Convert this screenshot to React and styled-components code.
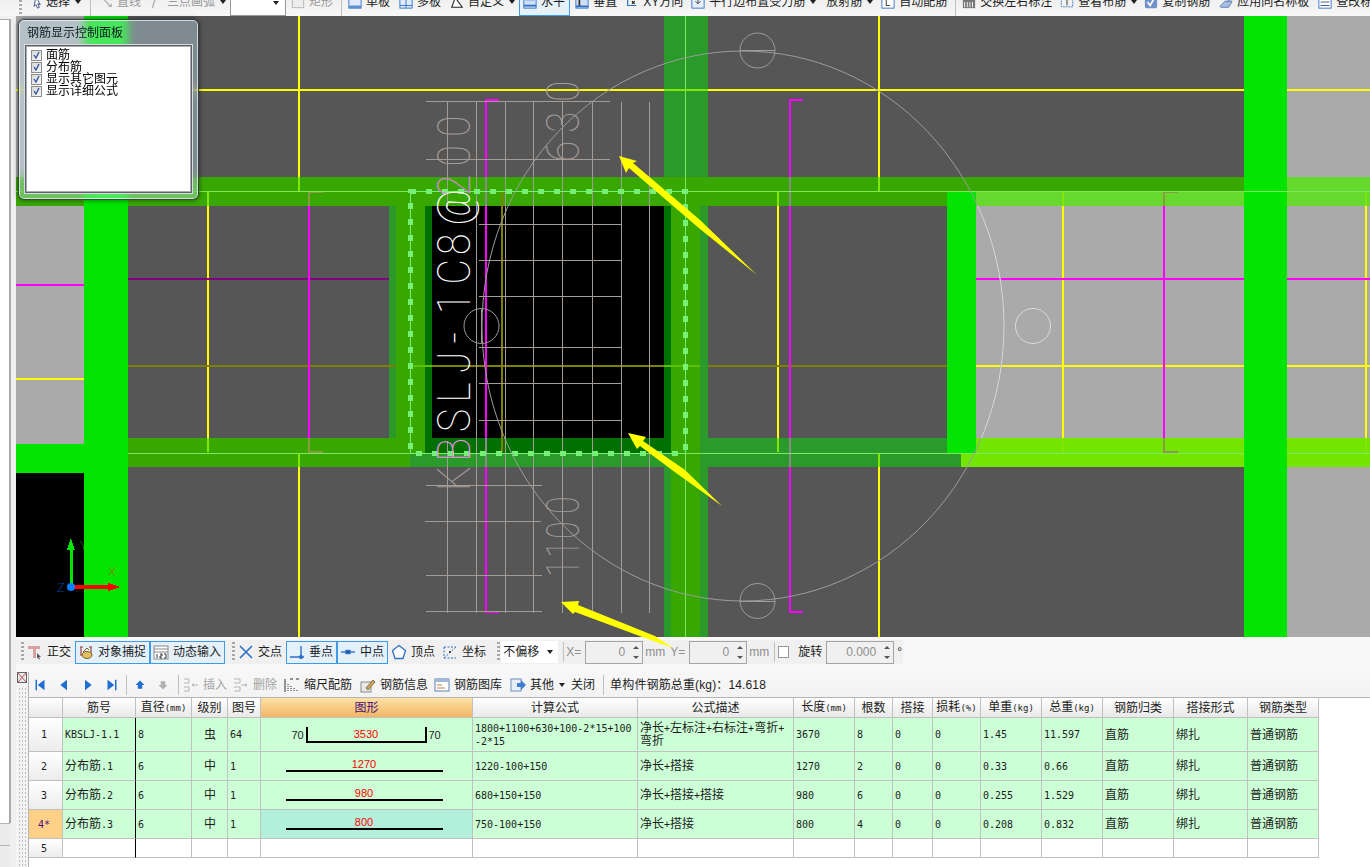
import React from "react";
import styled, { createGlobalStyle } from "styled-components";

const UI_FONT = `"Liberation Sans", "Noto Sans CJK SC", sans-serif`;
const MONO_FONT = `"DejaVu Sans Mono", "Liberation Mono", monospace`;

const GlobalStyle = createGlobalStyle`
  html, body { margin: 0; padding: 0; background: #fff; overflow: hidden; }
  * { box-sizing: border-box; }
`;

/* ---------- shell ---------- */
const Page = styled.div`
  width: 1370px;
  height: 867px;
  display: flex;
  flex-direction: column;
  overflow: hidden;
  font: 12px/12px ${UI_FONT};
  color: #1c1c1c;
`;

const MainRow = styled.div`
  flex: 1;
  display: flex;
  min-height: 0;
`;

const LeftPane = styled.div`
  width: 16px;
  display: flex;
  flex-direction: column;
  background: #f0f0f0;
`;

const LeftTop = styled.div`
  height: 4px;
  background: #f0f0f0;
  border-bottom: 1px solid #a9a9a9;
  margin-right: 5px;
`;

const LeftWhite = styled.div`
  flex: 1;
  margin-right: 5px;
  background: #fff;
  border-right: 2px solid #a9a9a9;
`;

const LeftTab = styled.div`
  height: 22px;
  margin-right: 6px;
  background: #ececec;
  border-top: 1px solid #b5b5b5;
`;

const Workspace = styled.div`
  flex: 1;
  display: flex;
  flex-direction: column;
  min-width: 0;
`;

/* ---------- top toolbar, cut off by the window ---------- */
const TopBar = styled.div`
  height: 16px;
  flex: none;
  display: flex;
  align-items: flex-end;
  padding-left: 19px;
  overflow: hidden;
  background: linear-gradient(#f0f0f0, #f7f7f7);
`;

const TopItem = styled.div`
  flex: none;
  height: 28px;
  margin-left: ${(p) => p.$ml || 0}px;
  display: flex;
  align-items: center;
  gap: 4px;
  white-space: nowrap;
  color: ${(p) => (p.$off ? "#9a9a9a" : "#1c1c1c")};
  ${(p) =>
    p.$active &&
    `
    padding: 0 4px 0 3px;
    border: 1px solid #3d9be8;
    background: #e6f2fb;
  `}
`;

const TopCombo = styled.div`
  flex: none;
  width: 56px;
  height: 28px;
  margin-left: ${(p) => p.$ml}px;
  position: relative;
  background: #fff;
  border: 1px solid #9a9a9a;
`;

const DropArrow = styled.span`
  flex: none;
  width: 0;
  height: 0;
  margin-left: 1px;
  border-left: 3px solid transparent;
  border-right: 3px solid transparent;
  border-top: 4px solid #222;
`;

const ComboArrow = styled(DropArrow)`
  position: absolute;
  right: 6px;
  top: 12px;
`;

const Sep = styled.span`
  flex: none;
  width: 1px;
  height: ${(p) => p.$h || 20}px;
  margin-left: ${(p) => p.$ml || 0}px;
  background: #c0c0c0;
`;

const Grip = styled.span`
  flex: none;
  width: 3px;
  height: ${(p) => p.$h || 20}px;
  margin-left: ${(p) => p.$ml || 0}px;
  background: repeating-linear-gradient(to bottom, #a8a8a8 0 2px, transparent 2px 4px);
`;

/* ---------- drawing area ---------- */
const CanvasWrap = styled.div`
  position: relative;
  z-index: 1;
  height: 621px;
  flex: none;
  background: #565656;
`;

const CadSvg = styled.svg`
  display: block;
  overflow: visible;
`;

const GlassPanel = styled.div`
  position: absolute;
  left: 2px;
  top: 3px;
  width: 181px;
  height: 181px;
  padding: 0 6px 6px 6px;
  display: flex;
  flex-direction: column;
  border-radius: 6px;
  border: 1px solid rgba(40, 50, 60, 0.85);
  background: rgba(200, 232, 250, 0.36);
  backdrop-filter: blur(5px);
  box-shadow: 0 0 5px rgba(0, 0, 0, 0.55), inset 0 0 0 1px rgba(255, 255, 255, 0.65);
`;

const GlassTitle = styled.div`
  height: 25px;
  flex: none;
  display: flex;
  align-items: center;
  padding-left: 2px;
  color: #0c1a20;
`;

const OptionList = styled.div`
  flex: 1;
  padding: 3px 0 0 5px;
  background: #fff;
  border: 1px solid #5c6068;
  outline: 1px solid #d8dde0;
  box-shadow: inset 0 0 0 1px #a8acb0;
`;

const OptionRow = styled.div`
  height: 12px;
  display: flex;
  align-items: center;
  gap: 4px;
  color: #000;
`;

const TickBox = styled.span`
  flex: none;
  width: 11px;
  height: 11px;
  display: flex;
  background: linear-gradient(135deg, #d8d8d8, #f6f6f6);
  border: 1px solid #8c8c8c;
`;

/* ---------- snap toolbar ---------- */
const SnapBar = styled.div`
  height: 35px;
  flex: none;
  padding-top: 3px;
  background: #f8f8f8;
`;

const SnapRow = styled.div`
  width: 887px;
  height: 24px;
  display: flex;
  align-items: center;
  padding-left: 5px;
  background: #f0f0f0;
`;

const SnapItem = styled.div`
  flex: none;
  height: 23px;
  margin-left: ${(p) => p.$ml || 0}px;
  display: flex;
  align-items: center;
  gap: 4px;
  white-space: nowrap;
  ${(p) =>
    p.$active &&
    `
    padding: 0 3px 0 2px;
    border: 1px solid #3d9be8;
    background: #e4f1fb;
  `}
`;

const OffsetSelect = styled.div`
  flex: none;
  width: 57px;
  height: 22px;
  margin-left: ${(p) => p.$ml}px;
  padding: 0 5px 0 2px;
  display: flex;
  align-items: center;
  justify-content: space-between;
  background: #fff;
`;

const FieldLabel = styled.span`
  flex: none;
  margin-left: ${(p) => p.$ml}px;
  color: ${(p) => (p.$off ? "#8f8f8f" : "#1c1c1c")};
`;

const SpinBox = styled.div`
  flex: none;
  width: ${(p) => p.$w}px;
  height: 23px;
  margin-left: ${(p) => p.$ml}px;
  padding: 0 1px 0 4px;
  display: flex;
  align-items: center;
  border: 1px solid #a4a4a4;
  color: #8f8f8f;
  font-size: 12px;
`;

const SpinValue = styled.span`
  flex: 1;
  text-align: right;
  padding-right: 6px;
`;

const SpinArrows = styled.span`
  flex: none;
  width: 10px;
  display: flex;
  flex-direction: column;
  align-items: center;
  gap: 7px;
`;

const SpinTip = styled.span`
  width: 0;
  height: 0;
  border-left: 3px solid transparent;
  border-right: 3px solid transparent;
  ${(p) => (p.$down ? "border-top: 3px solid #555;" : "border-bottom: 3px solid #555;")}
`;

const PlainCheck = styled.span`
  flex: none;
  width: 11px;
  height: 12px;
  margin-left: ${(p) => p.$ml}px;
  background: #fff;
  border: 1px solid #9a9a9a;
`;

/* ---------- rebar grid ---------- */
const GridSection = styled.div`
  flex: 1;
  display: flex;
  min-height: 0;
`;

const DockGrip = styled.div`
  width: 13px;
  flex: none;
  display: flex;
  flex-direction: column;
  background: #f4f4f4;
  border-right: 1px solid #b4b4b4;
`;

const DockClose = styled.div`
  height: 14px;
  flex: none;
  padding-left: 1px;
`;

const DockDots = styled.div`
  flex: 1;
  margin: 1px 2px 0 2px;
  background-image: radial-gradient(circle, #bdbdbd 0.8px, transparent 1px);
  background-size: 3px 4px;
`;

const GridMain = styled.div`
  flex: 1;
  min-width: 0;
  display: flex;
  flex-direction: column;
`;

const GridBar = styled.div`
  height: 26px;
  flex: none;
  display: flex;
  align-items: center;
  background: linear-gradient(#f7f7f7, #f3f3f3);
  border-bottom: 1px solid #b4b4b4;
`;

const GridTool = styled.div`
  flex: none;
  margin-left: ${(p) => p.$ml || 0}px;
  display: flex;
  align-items: center;
  gap: 4px;
  white-space: nowrap;
  color: ${(p) => (p.$off ? "#a4a4a4" : "#1c1c1c")};
`;

const TotalWeight = styled(GridTool)`
  letter-spacing: 0.14px;
`;

const RebarTable = styled.table`
  width: 1290px;
  table-layout: fixed;
  border-collapse: separate;
  border-spacing: 0;
`;

const HeadCell = styled.th`
  height: 20px;
  padding: 0;
  font-weight: 400;
  font-size: 12px;
  line-height: 12px;
  text-align: center;
  white-space: nowrap;
  overflow: hidden;
  color: ${(p) => (p.$hot ? "#4b0a78" : "#1c1c1c")};
  background: ${(p) =>
    p.$hot ? "linear-gradient(#fde1a6, #f0b764)" : "linear-gradient(#ffffff, #e9e9e9)"};
  border-right: 1px solid #c0c0c0;
  border-bottom: 1px solid #c0c0c0;
`;

const RowHead = styled.td`
  padding: 0 3px 0 0;
  text-align: center;
  color: ${(p) => (p.$current ? "#4b0a78" : "#1c1c1c")};
  background: ${(p) => (p.$current ? "#ffd188" : "linear-gradient(#ffffff, #ececec)")};
  border-right: 1px solid #c0c0c0;
  border-bottom: 1px solid #c0c0c0;
`;

const Cell = styled.td`
  height: ${(p) => p.$h}px;
  padding: 0 1px 0 2px;
  font-size: 12px;
  line-height: 12px;
  word-break: break-all;
  white-space: pre-line;
  text-align: ${(p) => (p.$center ? "center" : "left")};
  background: ${(p) => p.$bg};
  border-bottom: 1px solid #c0c0c0;
  border-right: 1px solid ${(p) => (p.$frozen ? "#000" : "#c0c0c0")};
`;

const Latin = styled.span`
  font-family: ${MONO_FONT};
  font-size: 10px;
  ${HeadCell} & {
    font-size: 9px;
  }
`;

const ShapeRow = styled.div`
  display: flex;
  align-items: center;
  justify-content: center;
  padding-right: ${(p) => p.$shift || 0}px;
`;

const HookNote = styled.span`
  flex: none;
  width: 14px;
  text-align: center;
  font: 11px/12px "Liberation Sans", sans-serif;
`;

const HookBar = styled.div`
  flex: none;
  width: 121px;
  height: 16px;
  margin: 0 1px;
  display: flex;
  align-items: center;
  justify-content: center;
  border: 2px solid #000;
  border-top: 0;
`;

const StraightBar = styled.div`
  flex: none;
  width: 157px;
  height: 14px;
  margin-bottom: 2px;
  display: flex;
  align-items: center;
  justify-content: center;
  border-bottom: 2px solid #000;
`;

const BarLength = styled.span`
  color: #ff0000;
  font: 11px/12px "Liberation Sans", sans-serif;
`;

/* ---------- toolbar icons ---------- */
const Icon = ({ name, size = 14 }) => (
  <svg width={size} height={size} viewBox="0 0 16 16" style={{ flex: "none", display: "block" }}>
    {ICONS[name]}
  </svg>
);

const blue = "#2f6fc4";
const ICONS = {
  pick: <path d="M9 2l5 9-3-1 2 4-2 1-2-4-2 2z" fill="#fff" stroke="#2a4a80" />,
  line: (
    <g fill="none" stroke="#b0b0b0" strokeWidth="1.5">
      <path d="M3 2l10 11" />
      <path d="M11 13h3v-3" />
    </g>
  ),
  arc: <path d="M4 15c1-4 1-8 5-12" fill="none" stroke="#b0b0b0" strokeWidth="1.5" />,
  rect: <rect x="1.5" y="1.5" width="13" height="13" fill="#eee" stroke="#b4b4b4" />,
  slab: (
    <g>
      <rect x="1" y="1" width="14" height="14" fill="#dfeafa" stroke={blue} />
      <path d="M1 12h14v3H1z" fill="#5d8fd8" />
    </g>
  ),
  slabs: (
    <g>
      <rect x="1" y="1" width="14" height="14" fill="#dfeafa" stroke={blue} />
      <path d="M8 1v14M1 12h14" stroke={blue} />
    </g>
  ),
  custom: <path d="M2 14h12L6 3z" fill="#fff" stroke="#222" strokeWidth="1.2" />,
  horiz: (
    <g>
      <rect x="1" y="1" width="14" height="14" fill="#cfe0f5" stroke={blue} />
      <path d="M3 5h10M1 12h14" stroke={blue} strokeWidth="2" />
    </g>
  ),
  vert: (
    <g>
      <rect x="1" y="1" width="14" height="14" fill="#cfe0f5" stroke={blue} />
      <path d="M5 3v10" stroke="#333" strokeWidth="2" />
      <path d="M1 13h14" stroke={blue} strokeWidth="2" />
    </g>
  ),
  xy: (
    <g fill="none" stroke={blue} strokeWidth="1.3">
      <path d="M3 3v9h10" />
      <path d="M8 7l3 3m0-3l-3 3" stroke="#222" />
    </g>
  ),
  parallel: (
    <g>
      <rect x="1" y="1" width="14" height="14" fill="#e8f0fb" stroke={blue} />
      <path d="M8 4v6M5 7l3 3 3-3" fill="none" stroke="#333" />
    </g>
  ),
  auto: (
    <g>
      <rect x="1" y="1" width="14" height="14" fill="#fff" stroke={blue} />
      <path d="M6 4v8h4" fill="none" stroke="#222" />
    </g>
  ),
  swap: (
    <g>
      <rect x="1" y="5" width="14" height="10" fill="#777" />
      <path d="M3 8v6M6 8v6M9 8v6M12 8v6" stroke="#fff" />
    </g>
  ),
  viewBars: (
    <g fill="none" stroke={blue} strokeDasharray="2 1">
      <rect x="1.5" y="2.5" width="13" height="11" />
      <path d="M8 4v8" stroke="#222" strokeDasharray="none" />
    </g>
  ),
  copy: (
    <g>
      <rect x="1" y="1" width="14" height="14" rx="2" fill="#6f93c8" />
      <path d="M4 8l3 4 5-9" fill="none" stroke="#fff" strokeWidth="2" />
    </g>
  ),
  apply: (
    <g>
      <path d="M1 13l6-6h8l-4 7H2z" fill="#a8c0e4" stroke="#5074a8" />
      <path d="M8 2l5 3-4 3" fill="none" stroke="#5074a8" />
    </g>
  ),
  tag: (
    <g>
      <rect x="1" y="1" width="14" height="14" fill="#fff" stroke={blue} />
      <path d="M3 5h10M3 8h10M3 12h10" stroke="#2a4a80" />
    </g>
  ),
  ortho: (
    <g>
      <path d="M1 2h12v3H9v9H6V5H1z" fill="#d9a0a0" />
      <path d="M10 9l4 4-2 0 1 2-1 .5-1-2-1 1z" fill="#556" />
    </g>
  ),
  snap: (
    <g>
      <path d="M2 3h3M11 3h3M3 3v9M13 3v9" stroke="#a04040" strokeWidth="1.2" fill="none" />
      <ellipse cx="9" cy="11" rx="5" ry="3.5" fill="#e0c060" stroke="#806020" />
      <path d="M5 8l4-4 2 2" stroke="#806020" fill="none" />
    </g>
  ),
  dyn: (
    <g>
      <rect x="1" y="2" width="14" height="13" fill="#fff" stroke="#888" />
      <path d="M1 5h14M1 8h14" stroke="#888" />
      <path d="M4 10v4M7 10h2v2H7v2h2M11 10h2v4h-2" fill="none" stroke="#222" strokeWidth=".9" />
    </g>
  ),
  cross: <path d="M2 2l12 12M14 2L2 14" stroke={blue} strokeWidth="1.6" fill="none" />,
  perp: (
    <g stroke={blue} strokeWidth="1.4">
      <path d="M1 13h14M12 2v11" />
      <circle cx="12" cy="13" r="1.4" fill={blue} />
    </g>
  ),
  mid: (
    <g stroke={blue} strokeWidth="1.4">
      <path d="M1 8h14" />
      <rect x="6" y="6.5" width="4" height="3" fill="#1d4f9c" />
    </g>
  ),
  vertex: <path d="M8 1.5l6.5 5-2.5 8H4l-2.5-8z" fill="#fff" stroke={blue} strokeWidth="1.3" />,
  coord: (
    <g fill="none" stroke={blue} strokeDasharray="2 1.5">
      <path d="M2 14L14 3M2 3h12M2 14h12M2 3v11" />
      <circle cx="8" cy="8" r="1" fill="#222" stroke="none" />
    </g>
  ),
  first: <path d="M2 1h2v14H2zM14 1v14L5 8z" fill="#1f6fd0" />,
  prev: <path d="M12 1v14L3 8z" fill="#1f6fd0" />,
  next: <path d="M4 1v14l9-7z" fill="#1f6fd0" />,
  last: <path d="M12 1h2v14h-2zM2 1v14l9-7z" fill="#1f6fd0" />,
  up: <path d="M8 2l6 6h-3v5H5V8H2z" fill="#1f6fd0" />,
  down: <path d="M8 14l6-6h-3V3H5v5H2z" fill="#b0b0b0" />,
  insert: (
    <g fill="none" stroke="#b4b4b4">
      <path d="M1 2h5v4H1M1 10h5v4H1" />
      <path d="M9 8h6M11 6.5L9 8l2 1.5" />
    </g>
  ),
  remove: (
    <g fill="none" stroke="#b4b4b4">
      <path d="M1 2h6v4H1M1 10h6v4H1" />
      <path d="M8 8h6M12 6.5L14 8l-2 1.5" />
    </g>
  ),
  scale: (
    <g stroke="#333" fill="none">
      <path d="M1 2v13M15 2h-3M9 2H6" />
      <path d="M4 14V7M7 14V9M10 14v-3M13 14v-1" strokeDasharray="1 1" />
    </g>
  ),
  info: (
    <g>
      <rect x="1" y="5" width="10" height="10" fill="#e8e8e8" stroke="#888" />
      <path d="M6 11l7-8 2 2-7 8z" fill="#d8a050" stroke="#775" />
    </g>
  ),
  library: (
    <g>
      <rect x="1" y="2" width="14" height="12" fill="#fff" stroke="#5f7fae" />
      <path d="M1 2h14v3H1z" fill="#9fb8d8" />
      <path d="M3 8h5M3 11h8" stroke="#c08040" />
    </g>
  ),
  other: (
    <g>
      <rect x="1" y="2" width="10" height="12" fill="#e8eef8" stroke="#6f8fc0" />
      <path d="M7 6h4V3l5 5-5 5v-3H7z" fill="#3f7fd0" />
    </g>
  ),
};

/* ---------- data ---------- */
const topItems = [
  { ml: 6, icon: "pick", text: "选择", arrow: true },
  { sep: 9 },
  { ml: 8, icon: "line", text: "直线", off: true },
  { ml: 8, icon: "arc", text: "三点画弧", off: true, arrow: true },
  { combo: 4 },
  { ml: 5, icon: "rect", text: "矩形", off: true },
  { sep: 8 },
  { ml: 6, icon: "slab", text: "单板" },
  { ml: 9, icon: "slabs", text: "多板" },
  { ml: 9, icon: "custom", text: "自定义", arrow: true },
  { ml: 4, icon: "horiz", text: "水平", active: true },
  { ml: 5, icon: "vert", text: "垂直" },
  { ml: 8, icon: "xy", text: "XY方向" },
  { ml: 8, icon: "parallel", text: "平行边布置受力筋", arrow: true },
  { ml: 10, text: "放射筋", arrow: true },
  { ml: 8, icon: "auto", text: "自动配筋" },
  { sep: 8 },
  { ml: 6, icon: "swap", text: "交换左右标注" },
  { ml: 8, icon: "viewBars", text: "查看布筋", arrow: true },
  { ml: 7, icon: "copy", text: "复制钢筋" },
  { ml: 9, icon: "apply", text: "应用同名称板" },
  { ml: 9, icon: "tag", text: "查改标注" },
];

const snapLeft = [
  { ml: 3, icon: "ortho", text: "正交" },
  { ml: 4, icon: "snap", text: "对象捕捉", active: true },
  { ml: 0, icon: "dyn", text: "动态输入", active: true },
];
const snapRight = [
  { ml: 3, icon: "cross", text: "交点" },
  { ml: 4, icon: "perp", text: "垂点", active: true },
  { ml: 0, icon: "mid", text: "中点", active: true },
  { ml: 3, icon: "vertex", text: "顶点" },
  { ml: 7, icon: "coord", text: "坐标" },
];

const navTools = [
  { ml: 5, icon: "first", size: 12 },
  { ml: 12, icon: "prev", size: 12 },
  { ml: 12, icon: "next", size: 12 },
  { ml: 12, icon: "last", size: 12 },
];
const gridTools = [
  { ml: 4, icon: "insert", text: "插入", off: true },
  { ml: 6, icon: "remove", text: "删除", off: true },
  { ml: 7, icon: "scale", text: "缩尺配筋" },
  { ml: 8, icon: "info", text: "钢筋信息" },
  { ml: 6, icon: "library", text: "钢筋图库" },
  { ml: 8, icon: "other", text: "其他", arrow: true },
  { ml: 6, text: "关闭" },
];

const columns = [
  ["", 34], ["筋号", 73], ["直径(mm)", 56], ["级别", 36], ["图号", 33], ["图形", 212],
  ["计算公式", 165], ["公式描述", 156], ["长度(mm)", 61], ["根数", 38], ["搭接", 40],
  ["损耗(%)", 48], ["单重(kg)", 61], ["总重(kg)", 61], ["钢筋归类", 71], ["搭接形式", 74], ["钢筋类型", 71],
];

const rows = [
  { no: "1", h: 34, code: "KBSLJ-1.1", d: "8", grade: "虫", fig: "64", shape: "3530", hook: true,
    calc: "1800+1100+630+100-2*15+100-2*15", desc: "净长+左标注+右标注+弯折+\n弯折",
    len: "3670", count: "8", w1: "1.45", w2: "11.597" },
  { no: "2", h: 29, code: "分布筋.1", d: "6", grade: "中", fig: "1", shape: "1270",
    calc: "1220-100+150", desc: "净长+搭接", len: "1270", count: "2", w1: "0.33", w2: "0.66" },
  { no: "3", h: 29, code: "分布筋.2", d: "6", grade: "中", fig: "1", shape: "980",
    calc: "680+150+150", desc: "净长+搭接+搭接", len: "980", count: "6", w1: "0.255", w2: "1.529" },
  { no: "4*", h: 29, current: true, code: "分布筋.3", d: "6", grade: "中", fig: "1", shape: "800",
    calc: "750-100+150", desc: "净长+搭接", len: "800", count: "4", w1: "0.208", w2: "0.832" },
];

/* ascii runs get the narrow grid font, like the half width glyphs of the original */
const Runs = ({ text }) =>
  text.split(/([\x21-\x7e]+)/).map((part, i) =>
    /[\x21-\x7e]/.test(part) ? <Latin key={i}>{part}</Latin> : part
  );

/* ---------- CAD drawing, page coordinates ---------- */
const G1 = "#38a800";
const G2 = "#2a9a2a";
const G3 = "#007000";
const BRIGHT = "#00e400";
const LIGHT = "#66d82e";
const LIME = "#80e800";
const GREY = "#aaaaaa";
const YEL = "#ffff00";
const MAG = "#ff00ff";
const BAR = "#a39b96";
const WIRE = "#7be860";

const blocks = [
  [16, 16, 84, 177, GREY], [16, 206, 84, 444, GREY], [1287, 16, 1370, 177, GREY],
  [976, 206, 1370, 438, GREY], [1287, 467, 1370, 637, GREY],
  [16, 177, 1244, 206, G1], [1287, 177, 1370, 206, LIGHT], [975, 192, 1244, 206, LIGHT],
  [128, 438, 410, 467, G1], [700, 438, 961, 467, G2], [961, 438, 1370, 467, "#73e600"],
  [16, 444, 84, 473, BRIGHT], [16, 473, 84, 637, "#000"],
  [664, 16, 708, 177, G2],
  [664, 467, 671, 637, G2], [671, 467, 700, 637, G1], [700, 467, 708, 637, G2],
  [389, 206, 396, 438, G2], [396, 206, 425, 453, G1], [425, 206, 432, 438, G3],
  [432, 206, 664, 438, "#000"], [664, 206, 671, 438, G3], [671, 206, 700, 467, G1], [700, 206, 708, 438, G2],
  [425, 438, 671, 453, G3], [410, 453, 671, 467, G2],
  [84, 16, 128, 637, BRIGHT], [947, 192, 976, 453, BRIGHT], [1244, 16, 1287, 637, BRIGHT],
];

const vertical = (x, y1, y2, color) => [x - 1, y1, x + 1, y2, color];
const horizontal = (y, x1, x2, color) => [x1, y - 1, x2, y + 1, color];

const gridLines = [
  ...[299, 879].flatMap((x) => [
    vertical(x, 16, 177, YEL), vertical(x, 177, 191, LIME), vertical(x, 453, 467, LIME), vertical(x, 467, 637, YEL),
  ]),
  ...[208, 778, 1063, 1366].flatMap((x) => [
    vertical(x, 192, 206, LIME), vertical(x, 206, 438, YEL), vertical(x, 438, 452, LIME),
  ]),
  horizontal(90, 16, 664, YEL), horizontal(90, 664, 708, LIME), horizontal(90, 708, 1244, YEL), horizontal(90, 1287, 1370, YEL),
  horizontal(366, 128, 396, "#808000"), horizontal(366, 411, 432, "#60c000"), horizontal(366, 432, 664, "#808000"),
  horizontal(366, 664, 700, "#60c000"), horizontal(366, 708, 947, "#808000"),
  horizontal(366, 976, 1244, YEL), horizontal(366, 1287, 1370, YEL), horizontal(379, 16, 84, YEL),
  horizontal(279, 128, 389, "#800080"), horizontal(279, 976, 1244, MAG), horizontal(279, 1287, 1370, MAG), horizontal(285, 16, 84, MAG),
  ...[309, 1164].flatMap((x) => [
    vertical(x, 206, 438, MAG), vertical(x, 192, 206, "#8a9a40"), vertical(x, 438, 452, "#8a9a40"),
    [x - 1, 191, x + 14, 193, "#8a9a40"], [x - 1, 451, x + 14, 453, "#8a9a40"],
  ]),
  ...[486, 790].flatMap((x) => [
    vertical(x, 100, 177, MAG), vertical(x, 177, 206, "#8a8a8a"), vertical(x, 206, 438, MAG),
    vertical(x, 438, 467, "#8a8a8a"), vertical(x, 467, 612, MAG),
    [x - 1, 99, x + 13, 101, MAG], [x - 1, 611, x + 13, 613, MAG],
  ]),
  vertical(502, 192, 452, "#808000"),
];

const wires = [
  [16, 191, 1370, 191], [128, 453, 1244, 453], [1287, 453, 1370, 453], [685, 16, 685, 637],
];

const rebarLines = [
  [447, 101, 447, 206], [447, 440, 447, 612],
  ...[476, 505, 533, 562, 592, 621, 649].map((x) => [x, 101, x, 612]),
  [425, 101, 609, 101], [425, 159, 609, 159],
  ...[224, 260, 296, 347, 383, 420].map((y) => [478, y, 620, y]),
  [425, 485, 541, 485], [424, 521, 540, 521], [425, 575, 541, 575], [425, 611, 541, 611],
];

const CAD_TEXT = {
  fontFamily: "Roboto, sans-serif",
  fontWeight: 100,
  fontSize: 46,
};

const mainLabel = [
  ["K", "#a39b96"], ["B", "#f090e8"], ["S", "#fff"], ["L", "#fff"], ["J", "#fff"], ["-", "#fff"], ["1", "#fff"],
  ["C", "#fff"], ["8", "#fff"], ["@", "#fff"], ["2", "#e080e0"], ["0", "#a39b96"], ["0", "#a39b96"],
].map(([ch, fill], i) => ({ ch, fill, at: i * 29.5 }));

const grey = (ch, at) => ({ ch, at, fill: "#a39b96" });
const spanLabel = [grey("6", 0), grey("3", 29), grey("0", 60)];
const lengthLabel = [grey("1", 0), grey("1", 19), grey("0", 38), grey("0", 63)];

/* text written upwards along a bar, squeezed to the narrow CAD letter width */
const BarLabel = ({ x, y, squeeze, chars }) => (
  <text transform={`translate(${x} ${y}) rotate(-90) scale(${squeeze} 1)`}>
    {chars.map((c, i) => (
      <tspan key={i} x={c.at / squeeze} fill={c.fill}>{c.ch}</tspan>
    ))}
  </text>
);

const arrows = [
  "619,156 637,161 633,163 700,220 757,275 700,229 629,168 626,173",
  "628,433 646,437 643,441 685,470 722,506 672,470 640,446 637,449",
  "561,602 579,601 578,605 655,636 673,648 645,638 575,612 573,614",
];

const CadDrawing = () => (
  <CadSvg width="1354" height="621" viewBox="16 16 1354 621">
    <defs>
      <clipPath id="over-grey">
        <rect x="976" y="206" width="268" height="232" />
      </clipPath>
    </defs>
    <g shapeRendering="crispEdges">
      {[...blocks, ...gridLines].map(([x1, y1, x2, y2, fill], i) => (
        <rect key={i} x={x1} y={y1} width={x2 - x1} height={y2 - y1} fill={fill} />
      ))}
      {wires.map(([x1, y1, x2, y2], i) => (
        <line key={i} x1={x1} y1={y1 + 0.5} x2={x2} y2={y2 + 0.5} transform={x1 === x2 ? "translate(.5 -.5)" : undefined} stroke={WIRE} />
      ))}
      {rebarLines.map(([x1, y1, x2, y2], i) => (
        <line key={i} x1={x1 + 0.5} y1={y1 + 0.5} x2={x2 + 0.5} y2={y2 + 0.5} stroke={BAR} />
      ))}
      <line x1="740" y1="50.5" x2="775" y2="50.5" stroke={BAR} />
      <line x1="740" y1="601.5" x2="775" y2="601.5" stroke={BAR} />
      <line x1="481.5" y1="309" x2="481.5" y2="343" stroke={BAR} />
      <rect x="410" y="191" width="275" height="262" fill="none" stroke="#76f076" />
      <rect x="410" y="191" width="275" height="262" fill="none" stroke="#76f076" strokeWidth="5" strokeDasharray="6 10" />
    </g>

    <g fill="none" stroke="#9c9c9c">
      <ellipse cx="743" cy="326" rx="261" ry="275" />
      <circle cx="757.5" cy="50.5" r="17.5" />
      <circle cx="757.5" cy="601" r="17.5" />
      <circle cx="481.5" cy="326" r="17.5" />
      <g clipPath="url(#over-grey)" stroke="#dcdcdc">
        <ellipse cx="743" cy="326" rx="261" ry="275" />
        <circle cx="1033" cy="326" r="17.5" />
      </g>
    </g>

    <g style={CAD_TEXT}>
      <BarLabel x={470} y={491} squeeze={0.85} chars={mainLabel} />
      <BarLabel x={579} y={162} squeeze={0.85} chars={spanLabel} />
      <BarLabel x={579} y={577} squeeze={0.7} chars={lengthLabel} />
    </g>

    {arrows.map((points) => (
      <polygon key={points} points={points} fill={YEL} />
    ))}

    <g shapeRendering="crispEdges">
      <rect x="69.5" y="549" width="3" height="38" fill="#00e400" />
      <polygon points="71,538 75,550 67,550" fill="#00e400" />
      <rect x="71" y="585" width="38" height="4" fill="#ff0000" />
      <polygon points="120,587 108,583 108,591" fill="#ff0000" />
    </g>
    <circle cx="71" cy="587" r="4" fill="#0a80ff" />
    <text x="57" y="592" fontFamily="Roboto, sans-serif" fontWeight="100" fontSize="13" fill="#0a80ff">Z</text>
    <text x="80" y="550" fontFamily="Roboto, sans-serif" fontWeight="100" fontSize="12" fill="#00e400">Y</text>
    <text x="108" y="576" fontFamily="Roboto, sans-serif" fontWeight="100" fontSize="13" fill="#ff0000">X</text>
  </CadSvg>
);

const options = ["面筋", "分布筋", "显示其它图元", "显示详细公式"];

const Tick = () => (
  <svg width="9" height="9" viewBox="0 0 9 9">
    <path d="M2 4l2 3 3-6" fill="none" stroke="#2c4fa0" strokeWidth="1.3" />
  </svg>
);

const renderTop = (item, i) => {
  if (item.sep !== undefined) return <Sep key={i} $ml={item.sep} />;
  if (item.combo !== undefined) {
    return (
      <TopCombo key={i} $ml={item.combo}>
        <ComboArrow />
      </TopCombo>
    );
  }
  return (
    <TopItem key={i} $ml={item.ml} $off={item.off} $active={item.active}>
      {item.icon && <Icon name={item.icon} />}
      {item.text}
      {item.arrow && <DropArrow />}
    </TopItem>
  );
};

const renderSnap = (item) => (
  <SnapItem key={item.text} $ml={item.ml} $active={item.active}>
    <Icon name={item.icon} size={16} />
    {item.text}
  </SnapItem>
);

const Spin = ({ w, ml, value }) => (
  <SpinBox $w={w} $ml={ml}>
    <SpinValue>{value}</SpinValue>
    <SpinArrows>
      <SpinTip />
      <SpinTip $down />
    </SpinArrows>
  </SpinBox>
);

const renderGridTool = (item) => (
  <GridTool key={item.icon || item.text} $ml={item.ml} $off={item.off}>
    {item.icon && <Icon name={item.icon} size={item.size || 16} />}
    {item.text}
    {item.arrow && <DropArrow />}
  </GridTool>
);

const GREEN_ROW = "#ccffd6";

const App = () => (
  <Page>
    <GlobalStyle />
    <TopBar>
      <Grip />
      {topItems.map(renderTop)}
    </TopBar>
    <MainRow>
      <LeftPane>
        <LeftTop />
        <LeftWhite />
        <LeftTab />
        <LeftTab />
      </LeftPane>
      <Workspace>
        <CanvasWrap>
          <CadDrawing />
          <GlassPanel>
            <GlassTitle>钢筋显示控制面板</GlassTitle>
            <OptionList>
              {options.map((label) => (
                <OptionRow key={label}>
                  <TickBox>
                    <Tick />
                  </TickBox>
                  {label}
                </OptionRow>
              ))}
            </OptionList>
          </GlassPanel>
        </CanvasWrap>

        <SnapBar>
          <SnapRow>
            <Grip />
            {snapLeft.map(renderSnap)}
            <Grip $ml={7} />
            {snapRight.map(renderSnap)}
            <Grip $ml={11} />
            <OffsetSelect $ml={1}>
              不偏移
              <DropArrow />
            </OffsetSelect>
            <Sep $ml={5} />
            <FieldLabel $ml={2} $off>X=</FieldLabel>
            <Spin w={58} ml={4} value="0" />
            <FieldLabel $ml={2} $off>mm</FieldLabel>
            <FieldLabel $ml={5} $off>Y=</FieldLabel>
            <Spin w={58} ml={4} value="0" />
            <FieldLabel $ml={2} $off>mm</FieldLabel>
            <Sep $ml={5} />
            <PlainCheck $ml={3} />
            <FieldLabel $ml={9}>旋转</FieldLabel>
            <Spin w={68} ml={4} value="0.000" />
            <FieldLabel $ml={3}>°</FieldLabel>
          </SnapRow>
        </SnapBar>

        <GridSection>
          <DockGrip>
            <DockClose>
              <svg width="10" height="11" viewBox="0 0 10 11">
                <rect x=".5" y=".5" width="9" height="10" fill="#e8e8e8" stroke="#666" />
                <path d="M1 1l8 9M9 1l-8 9" stroke="#c05050" />
              </svg>
            </DockClose>
            <DockDots />
          </DockGrip>
          <GridMain>
            <GridBar>
              {navTools.map(renderGridTool)}
              <Sep $ml={8} />
              <GridTool $ml={7}><Icon name="up" size={12} /></GridTool>
              <GridTool $ml={11}><Icon name="down" size={12} /></GridTool>
              <Sep $ml={9} />
              {gridTools.map(renderGridTool)}
              <Sep $ml={8} />
              <TotalWeight $ml={6}>单构件钢筋总重(kg)：14.618</TotalWeight>
            </GridBar>
            <RebarTable>
              <colgroup>
                {columns.map(([name, width], i) => (
                  <col key={i} style={{ width }} />
                ))}
              </colgroup>
              <thead>
                <tr>
                  {columns.map(([name], i) => (
                    <HeadCell key={i} $hot={name === "图形"}>
                      <Runs text={name} />
                    </HeadCell>
                  ))}
                </tr>
              </thead>
              <tbody>
                {rows.map((r) => (
                  <tr key={r.no}>
                    <RowHead $current={r.current}><Latin>{r.no}</Latin></RowHead>
                    <Cell $h={r.h} $bg={GREEN_ROW} $frozen><Runs text={r.code} /></Cell>
                    <Cell $h={r.h} $bg={GREEN_ROW}><Latin>{r.d}</Latin></Cell>
                    <Cell $h={r.h} $bg={GREEN_ROW} $center>{r.grade}</Cell>
                    <Cell $h={r.h} $bg={GREEN_ROW}><Latin>{r.fig}</Latin></Cell>
                    <Cell $h={r.h} $bg={r.current ? "#b2f0dc" : GREEN_ROW}>
                      <ShapeRow $shift={r.hook ? 2 : 6}>
                        {r.hook ? (
                          <>
                            <HookNote>70</HookNote>
                            <HookBar><BarLength>{r.shape}</BarLength></HookBar>
                            <HookNote>70</HookNote>
                          </>
                        ) : (
                          <StraightBar><BarLength>{r.shape}</BarLength></StraightBar>
                        )}
                      </ShapeRow>
                    </Cell>
                    <Cell $h={r.h} $bg={GREEN_ROW}><Runs text={r.calc} /></Cell>
                    <Cell $h={r.h} $bg={GREEN_ROW}><Runs text={r.desc} /></Cell>
                    <Cell $h={r.h} $bg={GREEN_ROW}><Latin>{r.len}</Latin></Cell>
                    <Cell $h={r.h} $bg={GREEN_ROW}><Latin>{r.count}</Latin></Cell>
                    <Cell $h={r.h} $bg={GREEN_ROW}><Latin>0</Latin></Cell>
                    <Cell $h={r.h} $bg={GREEN_ROW}><Latin>0</Latin></Cell>
                    <Cell $h={r.h} $bg={GREEN_ROW}><Latin>{r.w1}</Latin></Cell>
                    <Cell $h={r.h} $bg={GREEN_ROW}><Latin>{r.w2}</Latin></Cell>
                    <Cell $h={r.h} $bg={GREEN_ROW}>直筋</Cell>
                    <Cell $h={r.h} $bg={GREEN_ROW}>绑扎</Cell>
                    <Cell $h={r.h} $bg={GREEN_ROW}>普通钢筋</Cell>
                  </tr>
                ))}
                <tr>
                  <RowHead><Latin>5</Latin></RowHead>
                  {columns.slice(1).map(([name], i) => (
                    <Cell key={name} $h={19} $bg="#fff" $frozen={i === 0} />
                  ))}
                </tr>
              </tbody>
            </RebarTable>
          </GridMain>
        </GridSection>
      </Workspace>
    </MainRow>
  </Page>
);

export default App;
